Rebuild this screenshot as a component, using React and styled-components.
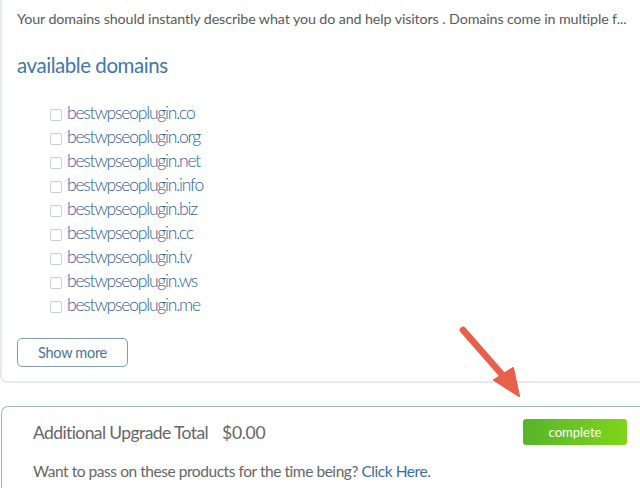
import React from "react";
import styled, { createGlobalStyle } from "styled-components";

const Global = createGlobalStyle`
  html, body { margin: 0; padding: 0; background: #ffffff; }
  body { font-family: "Lato", "Open Sans", sans-serif; overflow: hidden; }
  #root { width: 640px; height: 488px; position: relative; overflow: hidden; }
`;

const Page = styled.div`
  width: 640px;
  height: 488px;
  display: flex;
  flex-direction: column;
  position: relative;
`;

const DomainPanel = styled.section`
  width: 660px;
  border: 2px solid #e3ebf2;
  border-top: none;
  border-right: none;
  border-radius: 0 0 0 7px;
  padding: 9px 0 14px 15px;
  box-sizing: border-box;
  height: 383px;
`;

const Intro = styled.p`
  margin: 0;
  font-size: 14.3px;
  color: #5a5a5a;
  white-space: nowrap;
  line-height: 20px;
  letter-spacing: -0.12px;
`;

const Heading = styled.h2`
  margin: 23px 0 0 0;
  font-weight: 400;
  font-size: 20.5px;
  line-height: 26px;
  color: #3f76aa;
  letter-spacing: -0.45px;
`;

const DomainList = styled.ul`
  list-style: none;
  margin: 23px 0 0 33px;
  padding: 0;
`;

const DomainRow = styled.li`
  display: flex;
  align-items: center;
  height: 24px;
  gap: 5px;
`;

const Box = styled.span`
  width: 10px;
  height: 10px;
  border: 1px solid #c9ced3;
  border-radius: 2px;
  margin-top: 3px;
  background: #fff;
`;

const DomainName = styled.span`
  font-size: 17.5px;
  font-weight: 300;
  color: #2c5f9c;
  letter-spacing: -1.2px;
  line-height: 24px;
`;

const GhostButton = styled.button`
  margin-top: 21px;
  width: 111px;
  height: 29px;
  border: 1px solid #7f9db6;
  border-radius: 5px;
  background: #fff;
  color: #4b7397;
  font-family: "Lato", sans-serif;
  font-size: 14.5px;
  letter-spacing: -0.3px;
  padding: 0;
  display: block;
`;

const UpgradePanel = styled.section`
  margin-top: 23px;
  width: 660px;
  flex: 1;
  border: 1px solid #9cb3c7;
  border-right: none;
  border-bottom: none;
  border-radius: 7px 0 0 0;
  box-sizing: border-box;
  padding: 11px 0 0 31px;
  margin-left: 1px;
`;

const TotalRow = styled.div`
  display: flex;
  align-items: center;
  height: 28px;
  width: 594px;
`;

const TotalLabel = styled.span`
  font-size: 17.5px;
  color: #666;
  letter-spacing: -0.6px;
`;

const Amount = styled.span`
  margin-left: 14px;
  font-size: 17.5px;
  color: #666;
  letter-spacing: -0.3px;
`;

const CompleteButton = styled.button`
  margin-left: auto;
  width: 104px;
  height: 26px;
  border: none;
  border-radius: 3px;
  background: linear-gradient(to right, #56b52a, #80d51a);
  color: #fff;
  font-family: "Lato", sans-serif;
  font-size: 13px;
  padding: 0;
`;

const PassText = styled.p`
  margin: 16px 0 0 0;
  font-size: 15.5px;
  color: #666;
  letter-spacing: -0.45px;
`;

const Link = styled.a`
  color: #3b6ea4;
  text-decoration: none;
`;

const Arrow = styled.svg`
  position: absolute;
  left: 450px;
  top: 318px;
  pointer-events: none;
`;

const domains = ["co", "org", "net", "info", "biz", "cc", "tv", "ws", "me"];

export default function App() {
  return (
    <>
      <Global />
      <Page>
        <DomainPanel>
          <Intro>
            Your domains should instantly describe what you do and help visitors . Domains come in multiple f...
          </Intro>
          <Heading>available domains</Heading>
          <DomainList>
            {domains.map((d) => (
              <DomainRow key={d}>
                <Box />
                <DomainName>bestwpseoplugin.{d}</DomainName>
              </DomainRow>
            ))}
          </DomainList>
          <GhostButton>Show more</GhostButton>
        </DomainPanel>
        <UpgradePanel>
          <TotalRow>
            <TotalLabel>Additional Upgrade Total</TotalLabel>
            <Amount>$0.00</Amount>
            <CompleteButton>complete</CompleteButton>
          </TotalRow>
          <PassText>
            Want to pass on these products for the time being? <Link href="#">Click Here.</Link>
          </PassText>
        </UpgradePanel>
        <Arrow width="80" height="85" viewBox="0 0 80 85">
          <line x1="13" y1="12" x2="55" y2="60" stroke="#e8604c" strokeWidth="6.5" strokeLinecap="round" />
          <polygon points="44,62 69,78 63,50" fill="#e8604c" stroke="#e8604c" strokeWidth="2" strokeLinejoin="round" />
        </Arrow>
      </Page>
    </>
  );
}
